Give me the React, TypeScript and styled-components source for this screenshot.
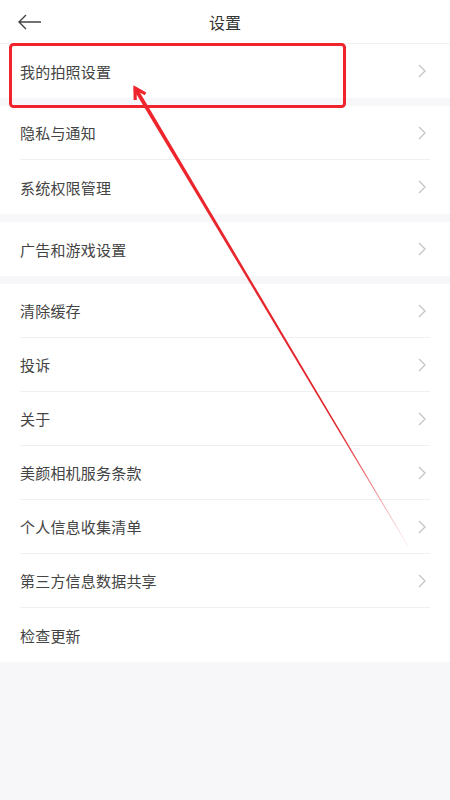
import styled, { createGlobalStyle } from 'styled-components';

const GlobalStyle = createGlobalStyle`
  html, body {
    margin: 0;
    padding: 0;
    background: #f7f7fa;
  }
  body {
    font-family: "Noto Sans CJK SC", "Noto Sans", sans-serif;
  }
`;

const colors = {
  pageGray: '#f7f7fa',
  white: '#ffffff',
  title: '#333333',
  text: '#444444',
  divider: '#f0f0f2',
  chevron: '#c6c6c8',
  annotation: '#f0242c',
};

const Page = styled.div`
  position: relative;
  width: 450px;
  min-height: 800px;
  background: ${colors.pageGray};
  overflow: hidden;
`;

const Header = styled.header`
  display: grid;
  grid-template-columns: 60px 1fr 60px;
  align-items: center;
  height: 43px;
  background: ${colors.white};
  border-bottom: 1px solid ${colors.divider};
`;

const BackButton = styled.button`
  display: flex;
  align-items: center;
  justify-content: flex-start;
  padding: 0 0 0 18px;
  height: 100%;
  border: none;
  background: none;
`;

const Title = styled.h1`
  margin: 0;
  text-align: center;
  font-size: 16px;
  font-weight: 400;
  color: ${colors.title};
`;

const Group = styled.section`
  display: flex;
  flex-direction: column;
  background: ${colors.white};
  margin-bottom: 8px;
`;

const Row = styled.div<{ $last?: boolean }>`
  display: flex;
  align-items: center;
  justify-content: space-between;
  height: ${(p) => (p.$last ? '54px' : '53px')};
  margin: 0 20px;
  border-bottom: ${(p) => (p.$last ? 'none' : `1px solid ${colors.divider}`)};
`;

const Label = styled.span`
  font-size: 15px;
  color: ${colors.text};
  letter-spacing: 0.2px;
`;

const Overlay = styled.svg`
  position: absolute;
  left: 0;
  top: 0;
  width: 450px;
  height: 800px;
  pointer-events: none;
`;

function Chevron() {
  return (
    <svg width="10" height="16" viewBox="0 0 10 16" style={{ marginRight: 3 }}>
      <path d="M2 2 L8 8 L2 14" fill="none" stroke={colors.chevron} strokeWidth="1.4" />
    </svg>
  );
}

function BackArrow() {
  return (
    <svg width="24" height="16" viewBox="0 0 24 16">
      <path d="M1 8 H23 M8 1 L1 8 L8 15" fill="none" stroke="#444" strokeWidth="1.4" />
    </svg>
  );
}

type Item = { label: string; arrow?: boolean };

const groups: Item[][] = [
  [{ label: '我的拍照设置', arrow: true }],
  [
    { label: '隐私与通知', arrow: true },
    { label: '系统权限管理', arrow: true },
  ],
  [{ label: '广告和游戏设置', arrow: true }],
  [
    { label: '清除缓存', arrow: true },
    { label: '投诉', arrow: true },
    { label: '关于', arrow: true },
    { label: '美颜相机服务条款', arrow: true },
    { label: '个人信息收集清单', arrow: true },
    { label: '第三方信息数据共享', arrow: true },
    { label: '检查更新' },
  ],
];

function Annotation() {
  return (
    <Overlay viewBox="0 0 450 800">
      <defs>
        <linearGradient id="fade" x1="135" y1="88" x2="410" y2="546" gradientUnits="userSpaceOnUse">
          <stop offset="0" stopColor={colors.annotation} stopOpacity="1" />
          <stop offset="0.75" stopColor="#e0262c" stopOpacity="1" />
          <stop offset="1" stopColor="#e0262c" stopOpacity="0.1" />
        </linearGradient>
      </defs>
      <rect x="10.5" y="44.5" width="334" height="62" rx="3" fill="none" stroke={colors.annotation} strokeWidth="3" />
      <polygon points="133.3,88.9 136.7,87.1 408.3,545.9 407.7,546.1" fill="url(#fade)" />
      <polyline
        points="145.5,93.8 135,88 135.2,100"
        fill="none"
        stroke={colors.annotation}
        strokeWidth="3.2"
        strokeLinejoin="miter"
      />
    </Overlay>
  );
}

export default function App() {
  return (
    <>
      <GlobalStyle />
      <Page>
        <Header>
          <BackButton aria-label="返回">
            <BackArrow />
          </BackButton>
          <Title>设置</Title>
          <span />
        </Header>
        {groups.map((items, gi) => (
          <Group key={gi}>
            {items.map((item, i) => (
              <Row key={item.label} $last={i === items.length - 1}>
                <Label>{item.label}</Label>
                {item.arrow && <Chevron />}
              </Row>
            ))}
          </Group>
        ))}
        <Annotation />
      </Page>
    </>
  );
}
